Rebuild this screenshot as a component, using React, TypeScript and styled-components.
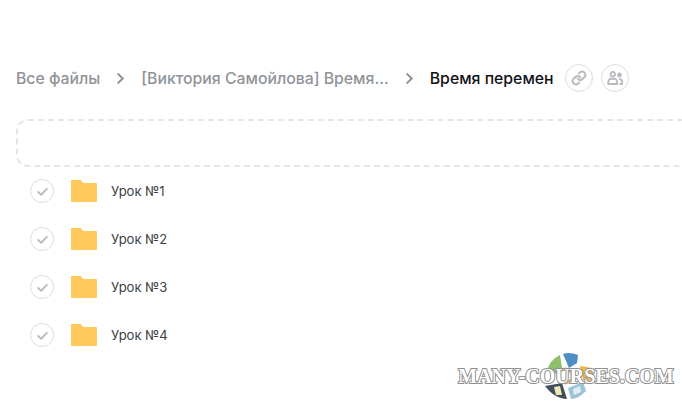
import React from 'react';
import styled, { createGlobalStyle } from 'styled-components';
import { FaChevronRight } from 'react-icons/fa';

const GlobalStyle = createGlobalStyle`
  html, body {
    margin: 0;
    padding: 0;
    background: #fff;
    overflow: hidden;
  }
`;

const Page = styled.div`
  position: relative;
  width: 682px;
  height: 409px;
  overflow: hidden;
  padding: 64px 0 0 16px;
  box-sizing: border-box;
  font-family: Inter, 'Noto Sans', sans-serif;
`;

const Breadcrumbs = styled.div`
  display: flex;
  align-items: center;
  height: 28px;
`;

const Crumb = styled.span<{ $current?: boolean }>`
  font-size: 15.8px;
  font-weight: 500;
  white-space: nowrap;
  color: ${props => (props.$current ? '#111216' : '#909399')};
`;

const Separator = styled.span`
  display: flex;
  width: 41px;
  justify-content: center;
  color: #909399;
  font-size: 13px;
`;

const RoundButton = styled.button<{ $first?: boolean }>`
  width: 28px;
  height: 28px;
  margin-left: ${props => (props.$first ? '11px' : '8px')};
  padding: 0;
  display: flex;
  align-items: center;
  justify-content: center;
  background: #fff;
  border: 1px solid #dcdde0;
  border-radius: 50%;
  color: #b9bbbf;
`;

const DropZone = styled.div`
  width: 700px;
  height: 48px;
  margin-top: 27px;
  box-sizing: border-box;
  border: 2px dashed #e4e5e7;
  border-radius: 12px;
`;

const FileList = styled.div`
  display: flex;
  flex-direction: column;
  padding-left: 14px;
`;

const FileRow = styled.div`
  display: flex;
  align-items: center;
  height: 48px;
`;

const Check = styled.span`
  width: 24px;
  height: 24px;
  box-sizing: border-box;
  display: flex;
  align-items: center;
  justify-content: center;
  border: 1px solid #dcdde0;
  border-radius: 50%;
  color: #b9babd;
`;

const FolderIcon = styled.svg`
  width: 26px;
  height: 22px;
  margin-left: 17px;
`;

const FileName = styled.span`
  margin-left: 14px;
  font-size: 13px;
  color: #3c3e43;
`;

const Watermark = styled.div`
  position: absolute;
  left: 458px;
  top: 351px;
  width: 216px;
  height: 50px;
  display: flex;
  align-items: center;
  justify-content: center;
`;

const WatermarkLogo = styled.svg`
  position: absolute;
  left: 87px;
  top: 0;
  width: 50px;
  height: 50px;
`;

const WatermarkText = styled.span`
  position: relative;
  font-family: 'Liberation Serif', serif;
  font-size: 20px;
  font-weight: 700;
  white-space: nowrap;
  color: #fff;
  -webkit-text-stroke: 2px #8f8f8f;
  paint-order: stroke fill;
`;

const LinkGlyph = () => (
  <svg width="16" height="16" viewBox="0 0 24 24" fill="none" stroke="currentColor" strokeWidth="3" strokeLinecap="round" strokeLinejoin="round">
    <path d="M10 13a5 5 0 0 0 7.5.5l3-3a5 5 0 0 0-7-7l-1.7 1.7" />
    <path d="M14 11a5 5 0 0 0-7.5-.5l-3 3a5 5 0 0 0 7 7l1.7-1.7" />
  </svg>
);

const PeopleGlyph = () => (
  <svg width="18" height="18" viewBox="0 0 24 24" fill="none" stroke="currentColor" strokeWidth="2.4" strokeLinecap="round" strokeLinejoin="round">
    <circle cx="9" cy="7" r="3" />
    <circle cx="18" cy="8" r="2" fill="currentColor" />
    <path d="M3 20v-2.5A4.5 4.5 0 0 1 7.5 13h3a4.5 4.5 0 0 1 4.5 4.5V20z" />
    <path d="M18 13.5c2 .2 3.5 1.8 3.5 3.8V20H19" />
  </svg>
);

const CheckGlyph = () => (
  <svg width="13" height="13" viewBox="0 0 24 24" fill="none" stroke="currentColor" strokeWidth="3.4" strokeLinecap="round" strokeLinejoin="round">
    <path d="M4 13l5.5 5L20 7" />
  </svg>
);

const lessons = ['Урок №1', 'Урок №2', 'Урок №3', 'Урок №4'];

const App = (): JSX.Element => (
  <Page>
    <GlobalStyle />
    <Breadcrumbs>
      <Crumb>Все файлы</Crumb>
      <Separator><FaChevronRight /></Separator>
      <Crumb>[Виктория Самойлова] Время...</Crumb>
      <Separator><FaChevronRight /></Separator>
      <Crumb $current>Время перемен</Crumb>
      <RoundButton $first><LinkGlyph /></RoundButton>
      <RoundButton><PeopleGlyph /></RoundButton>
    </Breadcrumbs>
    <DropZone />
    <FileList>
      {lessons.map(name => (
        <FileRow key={name}>
          <Check><CheckGlyph /></Check>
          <FolderIcon viewBox="0 0 26 22">
            <path d="M0 1a1 1 0 0 1 1-1h8.5l3 3H25a1 1 0 0 1 1 1v17a1 1 0 0 1-1 1H1a1 1 0 0 1-1-1z" fill="#ffc95c" />
          </FolderIcon>
          <FileName>{name}</FileName>
        </FileRow>
      ))}
    </FileList>
    <Watermark>
      <WatermarkLogo viewBox="0 0 50 50">
        <path d="M3 17 C5 11 9 7 15 4 L17 17 L11 23z" fill="#8fbf6a" />
        <path d="M18 3 C23 1 28 2 33 4 L32 12 L24 17z" fill="#4f8fc4" />
        <path d="M35 15 L47 17 C49 21 49 26 48 30 L38 29z" fill="#f0b445" />
        <path d="M23 37 L38 31 L41 40 C36 45 31 48 26 48z" fill="#9cc3d8" />
        <path d="M0 35 L17 32 L22 48 C14 48 6 43 0 35z" fill="#3f4f5f" />
        <path d="M9 36 L15 35 L17 44 L11 44z" fill="#f2e7b5" />
        <path d="M28 38 L35 35 L36 41 L29 44z" fill="#e6edf0" />
        <circle cx="20" cy="25" r="7" fill="none" stroke="#d9a04a" strokeWidth="3" opacity="0.75" />
      </WatermarkLogo>
      <WatermarkText>MANY-COURSES.COM</WatermarkText>
    </Watermark>
  </Page>
);

export default App;
